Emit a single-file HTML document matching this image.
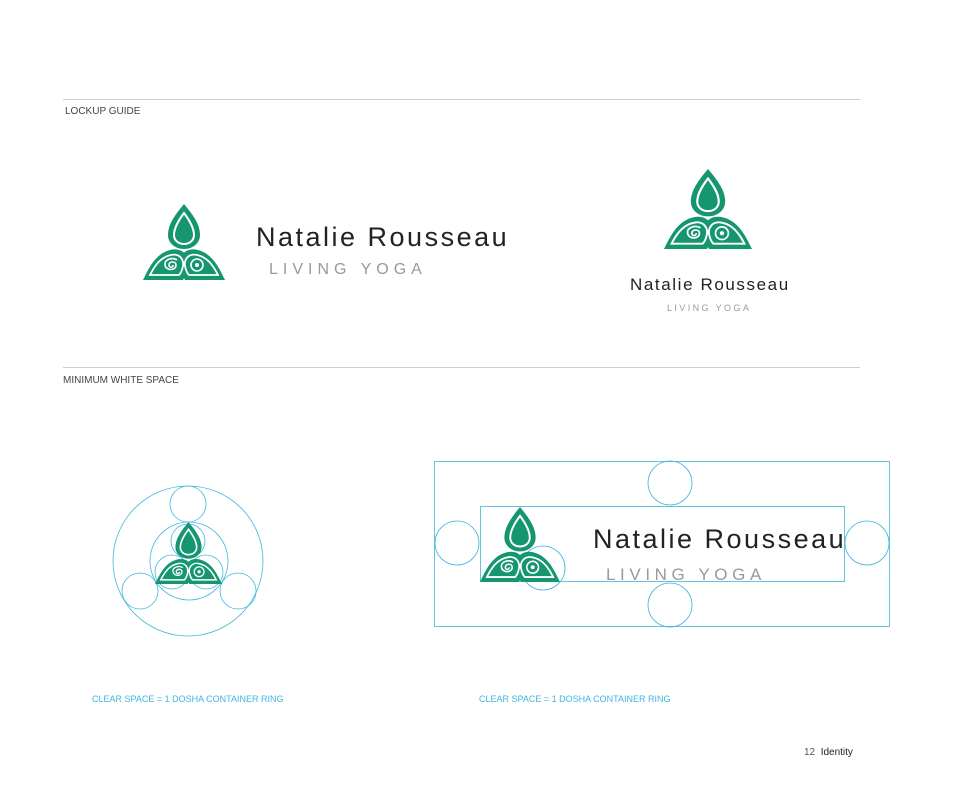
<!DOCTYPE html>
<html><head><meta charset="utf-8"><style>
body{margin:0;width:960px;height:806px;background:#fff;position:relative;font-family:"Liberation Sans",sans-serif;overflow:hidden}
.t{position:absolute;white-space:nowrap}
.hr{position:absolute;left:63px;width:797px;height:1px;background:#cfcfcf}
</style></head><body>
<svg width="0" height="0" style="position:absolute">
<defs>
<g id="logo">
<path d="M41 0 C51 12 57 21 57 31 C57 39 50 45 41 45 C32 45 25 39 25 31 C25 21 31 12 41 0Z" fill="#16966f"/>
<path d="M41 9 C47 17 51 24 51 31 C51 36 47 40 41 40 C35 40 31 36 31 31 C31 24 35 17 41 9Z" fill="none" stroke="#fff" stroke-width="2"/>
<path d="M41 16 C45 22 47 27 45 32 C43 36 38 36 37 32 C36 28 39 25 41 16Z" fill="#16966f"/>
<path d="M0 76 C6 64 12 50 27 46 C39 43 46 51 45 61 C44 69 41 74 40 76 Z" fill="#16966f"/>
<path d="M82 76 C76 64 70 50 55 46 C43 43 36 51 37 61 C38 69 41 74 42 76 Z" fill="#16966f"/>
<path d="M7 71 C12 61 18 53 28 51 C37 49 41 56 40 62 C39 67 37 70 36 71 Z" fill="none" stroke="#fff" stroke-width="1.8"/>
<path d="M75 71 C70 61 64 53 54 51 C45 49 41 56 42 62 C43 67 45 70 46 71 Z" fill="none" stroke="#fff" stroke-width="1.8"/>
<path d="M30 61 C30 64 26 64 26 61 C26 57 33 57 33 61 C33 67 23 67 22 61 C21 55 30 53 34 56" fill="none" stroke="#fff" stroke-width="1.6"/>
<circle cx="54" cy="61" r="6" fill="none" stroke="#fff" stroke-width="1.6"/>
<circle cx="54" cy="61" r="2" fill="#fff"/>
</g>
</defs>
</svg>

<div class="hr" style="top:99px"></div>
<div class="t" style="left:65px;top:106px;font-size:10px;color:#444">LOCKUP GUIDE</div>
<svg style="position:absolute;left:143px;top:204px" width="82" height="76" viewBox="0 0 82 76"><use href="#logo"/></svg>
<div class="t" style="left:256px;top:222px;font-size:27px;color:#222;letter-spacing:2.5px">Natalie Rousseau</div>
<div class="t" style="left:269px;top:261px;font-size:16px;color:#999;letter-spacing:5px">LIVING YOGA</div>

<svg style="position:absolute;left:664px;top:169px" width="88" height="80" viewBox="0 0 82 76" preserveAspectRatio="none"><use href="#logo"/></svg>
<div class="t" style="left:630px;top:275px;font-size:17px;color:#222;letter-spacing:1.6px">Natalie Rousseau</div>
<div class="t" style="left:667px;top:303px;font-size:9px;color:#999;letter-spacing:2.4px">LIVING YOGA</div>

<div class="hr" style="top:367px"></div>
<div class="t" style="left:63px;top:375px;font-size:10px;color:#444">MINIMUM WHITE SPACE</div>

<svg style="position:absolute;left:0;top:0" width="960" height="806">
<g fill="none" stroke="#3fb6dd" stroke-width="0.8">
<circle cx="188" cy="561" r="75"/>
<circle cx="188" cy="504" r="18"/>
<circle cx="189" cy="561" r="39"/>
<circle cx="140" cy="591" r="18"/>
<circle cx="238" cy="591" r="18"/>
<circle cx="188" cy="541" r="17"/>
<circle cx="172" cy="572" r="17"/>
<circle cx="206" cy="572" r="17"/>
<rect x="434.5" y="461.5" width="455" height="165"/>
<rect x="480.5" y="506.5" width="364" height="75"/>
<circle cx="670" cy="483" r="22"/>
<circle cx="670" cy="605" r="22"/>
<circle cx="457" cy="543" r="22"/>
<circle cx="867" cy="543" r="22"/>
<circle cx="543" cy="568" r="22"/>
</g>
</svg>
<svg style="position:absolute;left:155px;top:522px" width="67" height="62" viewBox="0 0 82 76" preserveAspectRatio="none"><use href="#logo"/></svg>
<svg style="position:absolute;left:480px;top:507px" width="80" height="75" viewBox="0 0 82 76" preserveAspectRatio="none"><use href="#logo"/></svg>
<div class="t" style="left:593px;top:524px;font-size:27px;color:#222;letter-spacing:2.5px">Natalie Rousseau</div>
<div class="t" style="left:606px;top:565px;font-size:17px;color:#999;letter-spacing:4.6px">LIVING YOGA</div>

<div class="t" style="left:92px;top:694px;font-size:9px;color:#3fb6dd">CLEAR SPACE = 1 DOSHA CONTAINER RING</div>
<div class="t" style="left:479px;top:694px;font-size:9px;color:#3fb6dd">CLEAR SPACE = 1 DOSHA CONTAINER RING</div>
<div class="t" style="left:804px;top:747px;font-size:10px;color:#555">12 &nbsp;<span style="color:#222">Identity</span></div>
</body></html>
